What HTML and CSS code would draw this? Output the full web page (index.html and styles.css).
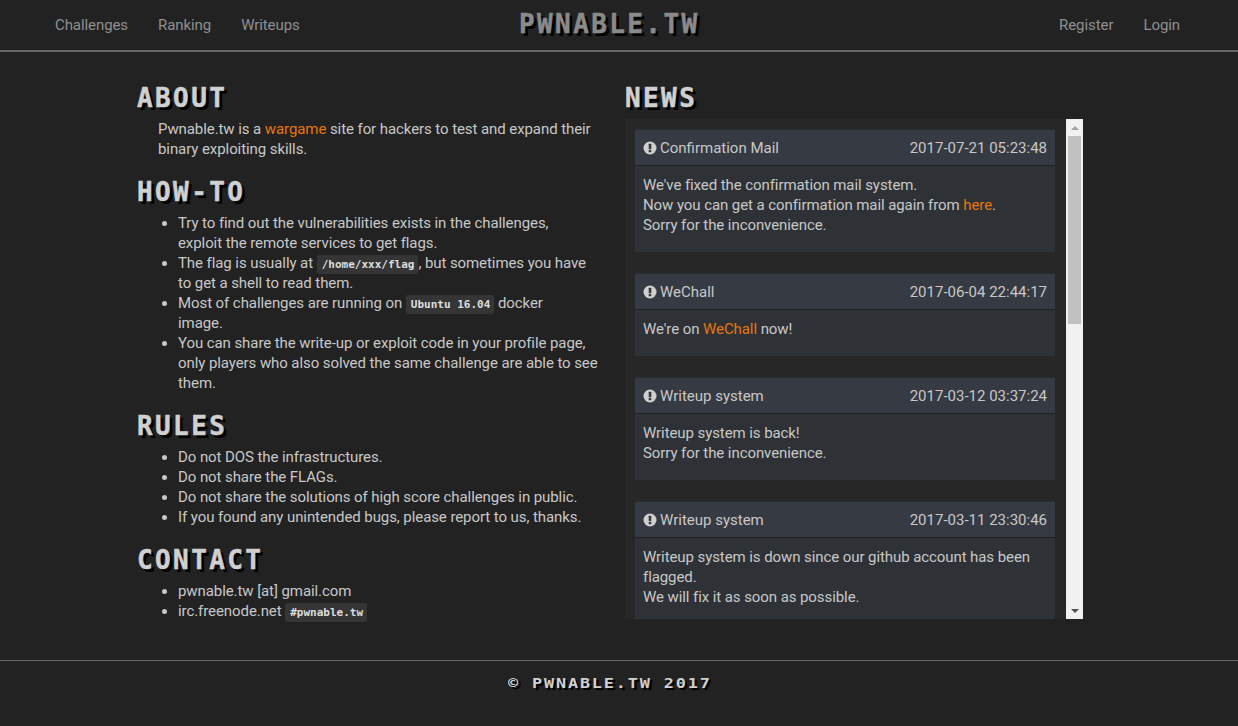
FILE: index.html
```html
<!DOCTYPE html>
<html lang="en">
<head>
<meta charset="utf-8">
<title>Pwnable.tw</title>
<link rel="stylesheet" href="styles.css">
</head>
<body>
<header class="topbar">
  <nav class="nav nav-left"><a href="#">Challenges</a><a href="#">Ranking</a><a href="#">Writeups</a></nav>
  <div class="brand">PWNABLE.TW</div>
  <nav class="nav nav-right"><a href="#">Register</a><a href="#">Login</a></nav>
</header>
<main class="content">
  <section class="col-left">
    <h2 class="pixel">ABOUT</h2>
    <p class="intro">Pwnable.tw is a <a href="#">wargame</a> site for hackers to test and expand their<br>binary exploiting skills.</p>
    <h2 class="pixel">HOW-TO</h2>
    <ul>
      <li>Try to find out the vulnerabilities exists in the challenges,<br>exploit the remote services to get flags.</li>
      <li>The flag is usually at <code>/home/xxx/flag</code>, but sometimes you have<br>to get a shell to read them.</li>
      <li>Most of challenges are running on <code>Ubuntu 16.04</code> docker<br>image.</li>
      <li>You can share the write-up or exploit code in your profile page,<br>only players who also solved the same challenge are able to see<br>them.</li>
    </ul>
    <h2 class="pixel">RULES</h2>
    <ul>
      <li>Do not DOS the infrastructures.</li>
      <li>Do not share the FLAGs.</li>
      <li>Do not share the solutions of high score challenges in public.</li>
      <li>If you found any unintended bugs, please report to us, thanks.</li>
    </ul>
    <h2 class="pixel">CONTACT</h2>
    <ul>
      <li>pwnable.tw [at] gmail.com</li>
      <li>irc.freenode.net <code>#pwnable.tw</code></li>
    </ul>
  </section>
  <section class="col-right">
    <h2 class="pixel">NEWS</h2>
    <div class="news">
      <div class="news-list">
        <article class="panel">
          <div class="panel-head"><span class="title"><svg class="icon" viewBox="0 0 14 14"><circle cx="7" cy="7" r="6.5" fill="#d0d0d0"/><rect x="5.7" y="2.8" width="2.6" height="5.4" rx=".5" fill="#363a42"/><rect x="5.7" y="9.1" width="2.6" height="2.2" rx=".4" fill="#363a42"/></svg>Confirmation Mail</span><span>2017-07-21 05:23:48</span></div>
          <div class="panel-body">We've fixed the confirmation mail system.<br>Now you can get a confirmation mail again from <a href="#">here</a>.<br>Sorry for the inconvenience.</div>
        </article>
        <article class="panel">
          <div class="panel-head"><span class="title"><svg class="icon" viewBox="0 0 14 14"><circle cx="7" cy="7" r="6.5" fill="#d0d0d0"/><rect x="5.7" y="2.8" width="2.6" height="5.4" rx=".5" fill="#363a42"/><rect x="5.7" y="9.1" width="2.6" height="2.2" rx=".4" fill="#363a42"/></svg>WeChall</span><span>2017-06-04 22:44:17</span></div>
          <div class="panel-body">We're on <a href="#">WeChall</a> now!</div>
        </article>
        <article class="panel">
          <div class="panel-head"><span class="title"><svg class="icon" viewBox="0 0 14 14"><circle cx="7" cy="7" r="6.5" fill="#d0d0d0"/><rect x="5.7" y="2.8" width="2.6" height="5.4" rx=".5" fill="#363a42"/><rect x="5.7" y="9.1" width="2.6" height="2.2" rx=".4" fill="#363a42"/></svg>Writeup system</span><span>2017-03-12 03:37:24</span></div>
          <div class="panel-body">Writeup system is back!<br>Sorry for the inconvenience.</div>
        </article>
        <article class="panel">
          <div class="panel-head"><span class="title"><svg class="icon" viewBox="0 0 14 14"><circle cx="7" cy="7" r="6.5" fill="#d0d0d0"/><rect x="5.7" y="2.8" width="2.6" height="5.4" rx=".5" fill="#363a42"/><rect x="5.7" y="9.1" width="2.6" height="2.2" rx=".4" fill="#363a42"/></svg>Writeup system</span><span>2017-03-11 23:30:46</span></div>
          <div class="panel-body">Writeup system is down since our github account has been flagged.<br>We will fix it as soon as possible.</div>
        </article>
      </div>
      <div class="scrollbar">
        <span class="arrow arrow-up"></span>
        <div class="track"><div class="thumb"></div></div>
        <span class="arrow arrow-down"></span>
      </div>
    </div>
  </section>
</main>
<footer class="footer"><span class="copy">© PWNABLE.TW 2017</span></footer>
</body>
</html>
```
FILE: styles.css
```css
* { box-sizing: border-box; }
html, body { height: 100%; }
body {
  margin: 0;
  background: #222;
  color: #c8c8c8;
  font: 15px/20px Roboto, "Noto Sans", sans-serif;
  letter-spacing: -.08px;
  overflow: hidden;
}
a { color: #e8760c; text-decoration: none; }
.topbar {
  height: 52px;
  border-bottom: 2px solid #666;
  display: grid;
  grid-template-columns: 464px auto 1fr;
  align-items: center;
  padding: 0 58px 0 55px;
}
.nav { display: flex; gap: 30px; }
.nav a { color: #8f8f8f; }
.nav-right { justify-content: flex-end; }
.brand, .pixel, .copy {
  font-family: "DejaVu Sans Mono", monospace;
  font-weight: 700;
}
.brand {
  font-size: 26px;
  line-height: 28px;
  letter-spacing: 2.4px;
  padding-bottom: 3px;
  color: #8a8a8a;
  -webkit-text-stroke: .5px #8a8a8a;
  text-shadow: 3px 3px 0 #000;
}
.content {
  height: 609px;
  display: flex;
  padding: 0 0 0 137px;
  border-bottom: 1px solid #666;
}
.col-left { width: 488px; padding-top: 32px; }
.col-right { width: 458px; padding-top: 32px; }
.pixel {
  margin: 0;
  font-size: 26px;
  line-height: 28px;
  letter-spacing: 2.4px;
  color: #d0d0d0;
  -webkit-text-stroke: .5px #d0d0d0;
  text-shadow: 3px 3px 0 #000;
}
.intro { margin: 7px 0 19px; padding: 0 0 0 21px; width: 470px; }
ul { margin: 7px 0 19px; padding: 0 0 0 41px; width: 470px; }
code {
  font: 700 11px/12px "DejaVu Sans Mono", monospace;
  letter-spacing: 0;
  background: #353535;
  color: #ddd;
  padding: 3px 4px 3px 5px;
  border-radius: 2px;
}
.news {
  margin-top: 7px;
  height: 500px;
  background: #272727;
  display: flex;
}
.news-list {
  flex: 1;
  min-width: 0;
  overflow: hidden;
  padding: 10px 11px 0 10px;
  display: flex;
  flex-direction: column;
  gap: 21px;
}
.panel { background: #2e3236; flex: none; }
.panel-head {
  height: 37px;
  background: #363a42;
  border-bottom: 1px solid #1f2124;
  border-top: 1px solid #2a2d32;
  padding: 0 8px;
  display: flex;
  justify-content: space-between;
  align-items: center;
  letter-spacing: 0;
}
.title { display: flex; align-items: center; }
.icon { width: 14px; height: 14px; margin-right: 3px; flex: none; }
.panel-body { padding: 9px 8px 17px; }
.scrollbar {
  width: 17px;
  flex: none;
  background: #f1f1f1;
  display: flex;
  flex-direction: column;
  align-items: center;
}
.arrow {
  flex: none;
  height: 17px;
  display: flex;
  align-items: center;
  justify-content: center;
}
.arrow::before {
  content: "";
  border-left: 4px solid transparent;
  border-right: 4px solid transparent;
}
.arrow-up::before { border-bottom: 4px solid #a3a3a3; }
.arrow-down::before { border-top: 4px solid #505050; }
.track { flex: 1; width: 13px; }
.thumb { height: 188px; background: #c0c0c0; }
.footer {
  text-align: center;
  padding: 12px 18px 0 0;
}
.copy {
  display: inline-block;
  font-size: 14px;
  line-height: 20px;
  letter-spacing: 1.55px;
  color: #d0d0d0;
  text-shadow: 2px 2px 0 #000;
  transform: scaleX(1.2);
}
```
